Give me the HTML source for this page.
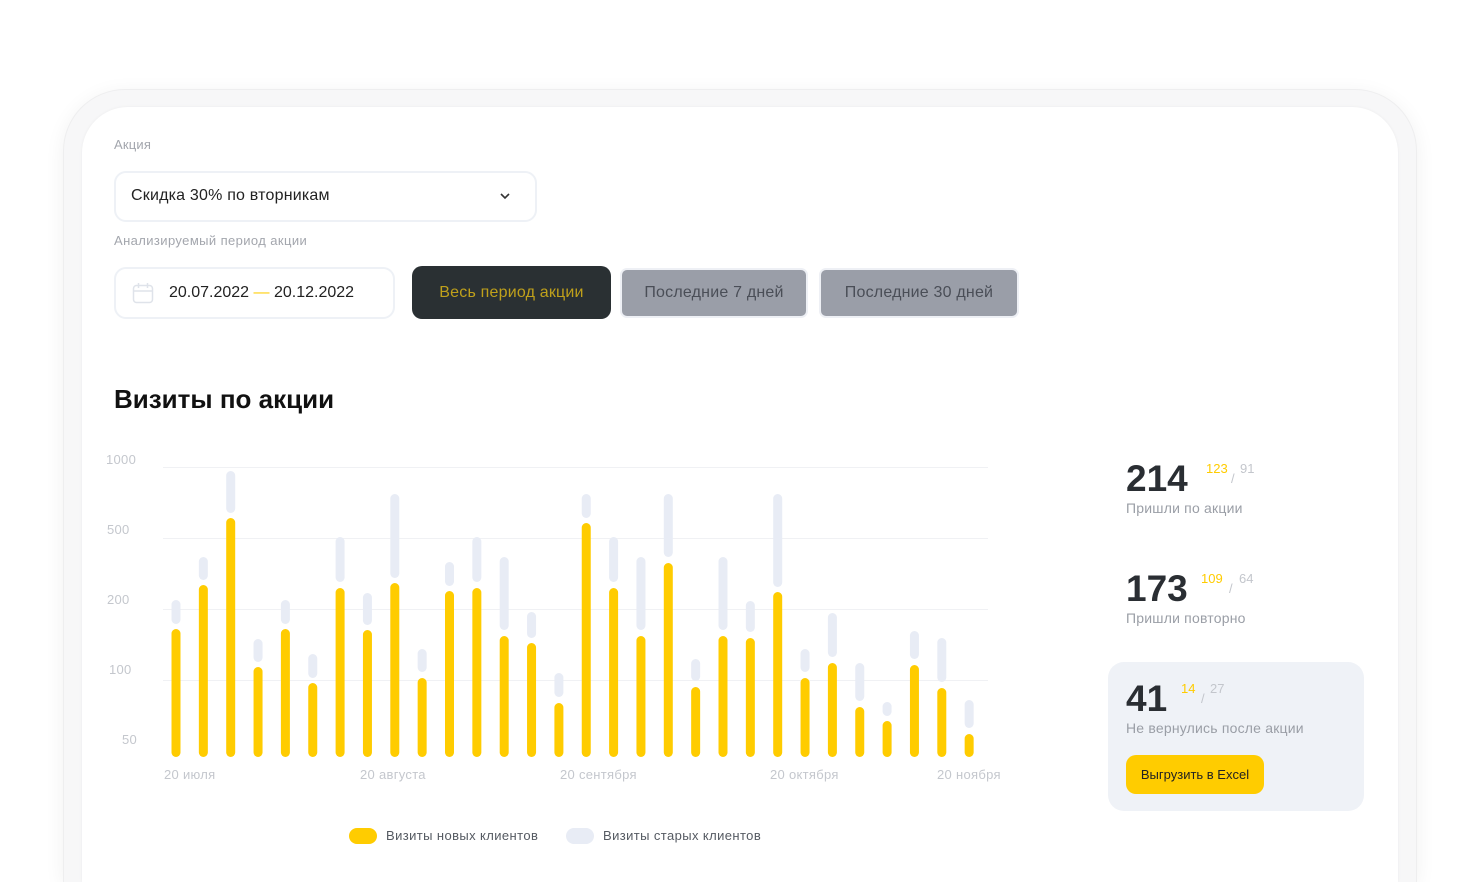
<!DOCTYPE html>
<html><head><meta charset="utf-8"><style>
*{box-sizing:border-box;margin:0;padding:0}
html,body{width:1480px;height:882px;overflow:hidden}
body{background:#fff;font-family:"Liberation Sans","DejaVu Sans",sans-serif;position:relative}
#wrap{position:absolute;left:0;top:0;width:1480px;height:882px;overflow:hidden}
.frame{position:absolute;left:63px;top:89px;width:1354px;height:793px;border-radius:62px 62px 0 0;background:#f7f7f8;box-shadow:0 4px 20px rgba(0,0,0,0.06);border:1px solid #eeeeef;border-bottom:none}
.inner{position:absolute;left:82px;top:107px;width:1316px;height:775px;border-radius:46px 46px 0 0;background:#fff;box-shadow:0 0 3px rgba(0,0,0,0.05)}
.abs{position:absolute}
.lbl{font-size:13px;color:#a3a6ad;letter-spacing:0.2px}
.box{border:2px solid #eef1f6;border-radius:12px;background:#fff}
.btn{position:absolute;top:268px;height:50px;border-radius:7px;background:#9a9ea8;border:2px solid #eef0f5;font-size:16px;color:#4a4e57;display:flex;align-items:center;justify-content:center;letter-spacing:0.2px}
.big{font-size:37px;font-weight:bold;color:#2a2e33}
.sub{font-size:14px;color:#9a9ea6;letter-spacing:0.2px}
.y{color:#ffcc00;font-size:13px}
.g{color:#c3c6cc;font-size:13px}
.ax{font-size:13px;color:#c4c7cd;letter-spacing:0.3px}
</style></head><body><div id="wrap">
<div class="frame"></div>
<div class="inner"></div>

<div class="abs lbl" style="left:114px;top:137px">Акция</div>
<div class="abs box" style="left:114px;top:171px;width:423px;height:51px"></div>
<div class="abs" style="left:131px;top:187px;font-size:16px;color:#222;letter-spacing:0.2px">Скидка 30% по вторникам</div>
<svg class="abs" style="left:499px;top:191px" width="12" height="10"><path d="M2 3l4 4 4-4" fill="none" stroke="#333" stroke-width="1.6"/></svg>

<div class="abs lbl" style="left:114px;top:233px;letter-spacing:0.4px">Анализируемый период акции</div>
<div class="abs box" style="left:114px;top:267px;width:281px;height:52px"></div>
<svg class="abs" style="left:132px;top:282px" width="22" height="22"><rect x="1.5" y="3.5" width="19" height="17" rx="3" fill="none" stroke="#dfe3ea" stroke-width="1.5"/><path d="M1.5 9h19M6.5 1v5M15.5 1v5" stroke="#dfe3ea" stroke-width="1.5"/></svg>
<div class="abs" style="left:169px;top:284px;font-size:16px;color:#222">20.07.2022 <span style="color:#ffcc00">—</span> 20.12.2022</div>
<div class="abs" style="left:412px;top:266px;width:199px;height:53px;border-radius:10px;background:#2a3033;color:#bfa01b;font-size:16px;display:flex;align-items:center;justify-content:center;letter-spacing:0.2px">Весь период акции</div>
<div class="btn" style="left:620px;width:188px">Последние 7 дней</div>
<div class="btn" style="left:819px;width:200px">Последние 30 дней</div>

<div class="abs" style="left:114px;top:384px;font-size:26px;font-weight:bold;color:#111">Визиты по акции</div>

<div class="abs ax" style="left:106px;top:452px">1000</div>
<div class="abs ax" style="left:107px;top:522px">500</div>
<div class="abs ax" style="left:107px;top:592px">200</div>
<div class="abs ax" style="left:109px;top:662px">100</div>
<div class="abs ax" style="left:122px;top:732px">50</div>
<div class="abs ax" style="left:164px;top:767px">20 июля</div>
<div class="abs ax" style="left:360px;top:767px">20 августа</div>
<div class="abs ax" style="left:560px;top:767px">20 сентября</div>
<div class="abs ax" style="left:770px;top:767px">20 октября</div>
<div class="abs ax" style="left:937px;top:767px">20 ноября</div>

<svg class="abs" style="left:0;top:0" width="1000" height="800">
<g stroke="#f0f1f4" stroke-width="1"><path d="M163 467.5H988M163 538.5H988M163 609.5H988M163 680.5H988"/></g>
<g id="bars"></g>
</svg>

<div class="abs" style="left:1126px;top:458px"><span class="big">214</span></div>
<div class="abs y" style="left:1206px;top:461px">123</div>
<div class="abs g" style="left:1231px;top:471px">/</div>
<div class="abs g" style="left:1240px;top:461px">91</div>
<div class="abs sub" style="left:1126px;top:500px">Пришли по акции</div>

<div class="abs" style="left:1126px;top:568px"><span class="big">173</span></div>
<div class="abs y" style="left:1201px;top:571px">109</div>
<div class="abs g" style="left:1229px;top:581px">/</div>
<div class="abs g" style="left:1239px;top:571px">64</div>
<div class="abs sub" style="left:1126px;top:610px">Пришли повторно</div>

<div class="abs" style="left:1108px;top:662px;width:256px;height:149px;border-radius:16px;background:#eff2f7"></div>
<div class="abs" style="left:1126px;top:678px"><span class="big">41</span></div>
<div class="abs y" style="left:1181px;top:681px">14</div>
<div class="abs g" style="left:1201px;top:691px">/</div>
<div class="abs g" style="left:1210px;top:681px">27</div>
<div class="abs sub" style="left:1126px;top:720px">Не вернулись после акции</div>
<div class="abs" style="left:1126px;top:755px;width:138px;height:39px;border-radius:10px;background:#ffcc00;font-size:13px;color:#222;display:flex;align-items:center;justify-content:center">Выгрузить в Excel</div>

<div class="abs" style="left:349px;top:828px;width:28px;height:16px;border-radius:8px;background:#ffcc00"></div>
<div class="abs" style="left:386px;top:828px;font-size:13px;color:#555a62;letter-spacing:0.4px">Визиты новых клиентов</div>
<div class="abs" style="left:566px;top:828px;width:28px;height:16px;border-radius:8px;background:#e8ecf5"></div>
<div class="abs" style="left:603px;top:828px;font-size:13px;color:#555a62;letter-spacing:0.4px">Визиты старых клиентов</div>
</div>
<script>
var d=[[629,600,624],[585,557,580],[518,471,513],[667,639,662],[629,600,624],[683,654,678],[588,537,582],[630,593,625],[583,494,578],[678,649,672],[591,562,586],[588,537,582],[636,557,630],[643,612,638],[703,673,697],[523,494,518],[588,537,582],[636,557,630],[563,494,557],[687,659,681],[636,557,630],[638,601,632],[592,494,587],[678,649,672],[663,613,657],[707,663,701],[721,702,716],[665,631,659],[688,638,682],[734,700,728]];
var s='';d.forEach(function(b,i){var x=176+i*27.35-4.5;
s+='<rect x="'+x+'" y="'+b[1]+'" width="9" height="'+(b[2]-b[1])+'" rx="4.5" fill="#e8ecf5"/>';
s+='<rect x="'+x+'" y="'+b[0]+'" width="9" height="'+(757-b[0])+'" rx="4.5" fill="#ffcc00"/>';});
document.getElementById('bars').innerHTML=s;
</script>
</body></html>
